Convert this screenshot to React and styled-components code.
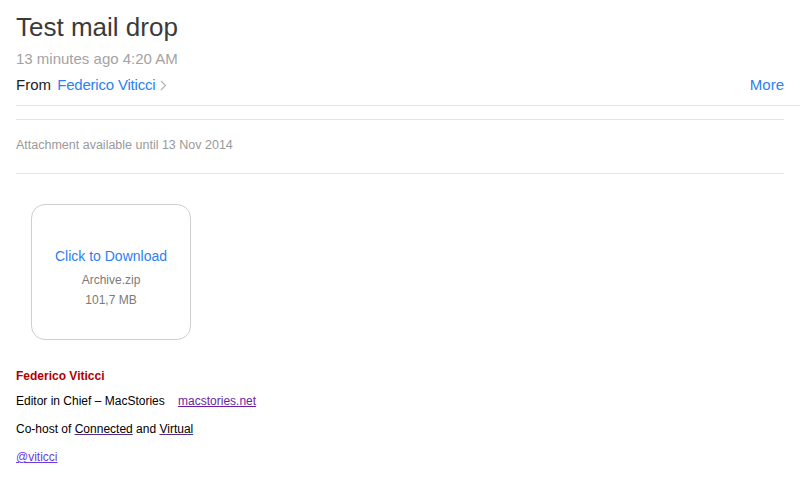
import React from "react";
import styled, { createGlobalStyle } from "styled-components";

const blue = "#2b7ff3";

const GlobalStyle = createGlobalStyle`
  html, body {
    margin: 0;
    padding: 0;
    background: #fff;
  }
  body {
    font-family: "Liberation Sans", Arial, sans-serif;
  }
`;

function App() {
  return (
    <Page>
      <GlobalStyle />
      <Header>
        <Title>Test mail drop</Title>
        <Timestamp>13 minutes ago 4:20 AM</Timestamp>
        <FromRow>
          <From>
            From <Sender>Federico Viticci</Sender>
            <Chevron width="7" height="11" viewBox="0 0 7 11">
              <path d="M1 1l4.5 4.5L1 10" fill="none" stroke="#b5b5b5" strokeWidth="1.2" />
            </Chevron>
          </From>
          <More>More</More>
        </FromRow>
      </Header>
      <Body>
        <Notice>Attachment available until 13 Nov 2014</Notice>
        <Attachment>
          <DownloadCard>
            <DownloadLabel>Click to Download</DownloadLabel>
            <FileMeta>Archive.zip</FileMeta>
            <FileMeta>101,7 MB</FileMeta>
          </DownloadCard>
        </Attachment>
        <Signature>
          <SigName>Federico Viticci</SigName>
          <SigLine>
            Editor in Chief – MacStories&nbsp;&nbsp;&nbsp;&nbsp;
            <SigLink href="#">macstories.net</SigLink>
          </SigLine>
          <SigLine>
            Co-host of <PlainLink href="#">Connected</PlainLink> and{" "}
            <PlainLink href="#">Virtual</PlainLink>
          </SigLine>
          <SigLine $gap={12}>
            <SigLink href="#" $handle>@viticci</SigLink>
          </SigLine>
        </Signature>
      </Body>
    </Page>
  );
}

const Page = styled.div`
  width: 800px;
  min-height: 477px;
  background: #fff;
`;

const Header = styled.div`
  margin-left: 16px;
  padding-top: 12px;
  padding-bottom: 10px;
  border-bottom: 1px solid #e3e3e3;
`;

const Title = styled.h1`
  margin: 0;
  font-size: 26px;
  line-height: 30px;
  font-weight: 400;
  color: #3a3a3a;
`;

const Timestamp = styled.div`
  margin-top: 7px;
  font-size: 15px;
  line-height: 20px;
  color: #a3a3a3;
`;

const FromRow = styled.div`
  margin-top: 6px;
  display: flex;
  justify-content: space-between;
  align-items: center;
  padding-right: 16px;
  font-size: 15px;
  line-height: 20px;
`;

const From = styled.div`
  color: #222;
  display: flex;
  align-items: center;
  white-space: pre;
`;

const Sender = styled.span`
  color: ${blue};
  margin-left: 2px;
  letter-spacing: -0.2px;
`;

const Chevron = styled.svg`
  margin-left: 5px;
`;

const More = styled.span`
  color: ${blue};
`;

const Body = styled.div`
  padding: 13px 16px 0;
`;

const Notice = styled.div`
  border-top: 1px solid #e6e6e6;
  border-bottom: 1px solid #e6e6e6;
  padding: 17px 0 19px;
  font-size: 12.5px;
  line-height: 17px;
  color: #9a9a9a;
`;

const Attachment = styled.div`
  padding: 30px 0 0 15px;
`;

const DownloadCard = styled.div`
  width: 158px;
  height: 122px;
  border: 1px solid #cfcfcf;
  border-radius: 14px;
  display: flex;
  flex-direction: column;
  align-items: center;
  justify-content: center;
  padding-top: 12px;
  box-sizing: content-box;
`;

const DownloadLabel = styled.div`
  color: ${blue};
  font-size: 14px;
  line-height: 18px;
  margin-bottom: 5px;
`;

const FileMeta = styled.div`
  color: #7a7a7a;
  font-size: 12px;
  line-height: 20px;
`;

const Signature = styled.div`
  padding-top: 28px;
  font-family: Arial, "Liberation Sans", sans-serif;
  font-size: 12px;
  color: #000;
`;

const SigName = styled.div`
  font-weight: 700;
  color: #b00000;
  line-height: 16px;
`;

const SigLine = styled.div`
  margin-top: 9px;
  line-height: 16px;

  & + & {
    margin-top: ${(p) => p.$gap || 11}px;
  }
`;

const SigLink = styled.a`
  color: ${(p) => (p.$handle ? "#6a3ce0" : "#6a1fa0")};
  text-decoration: underline;
`;

const PlainLink = styled.a`
  color: #000;
  text-decoration: underline;
  text-decoration-color: #5a2a8a;
`;

export default App;
